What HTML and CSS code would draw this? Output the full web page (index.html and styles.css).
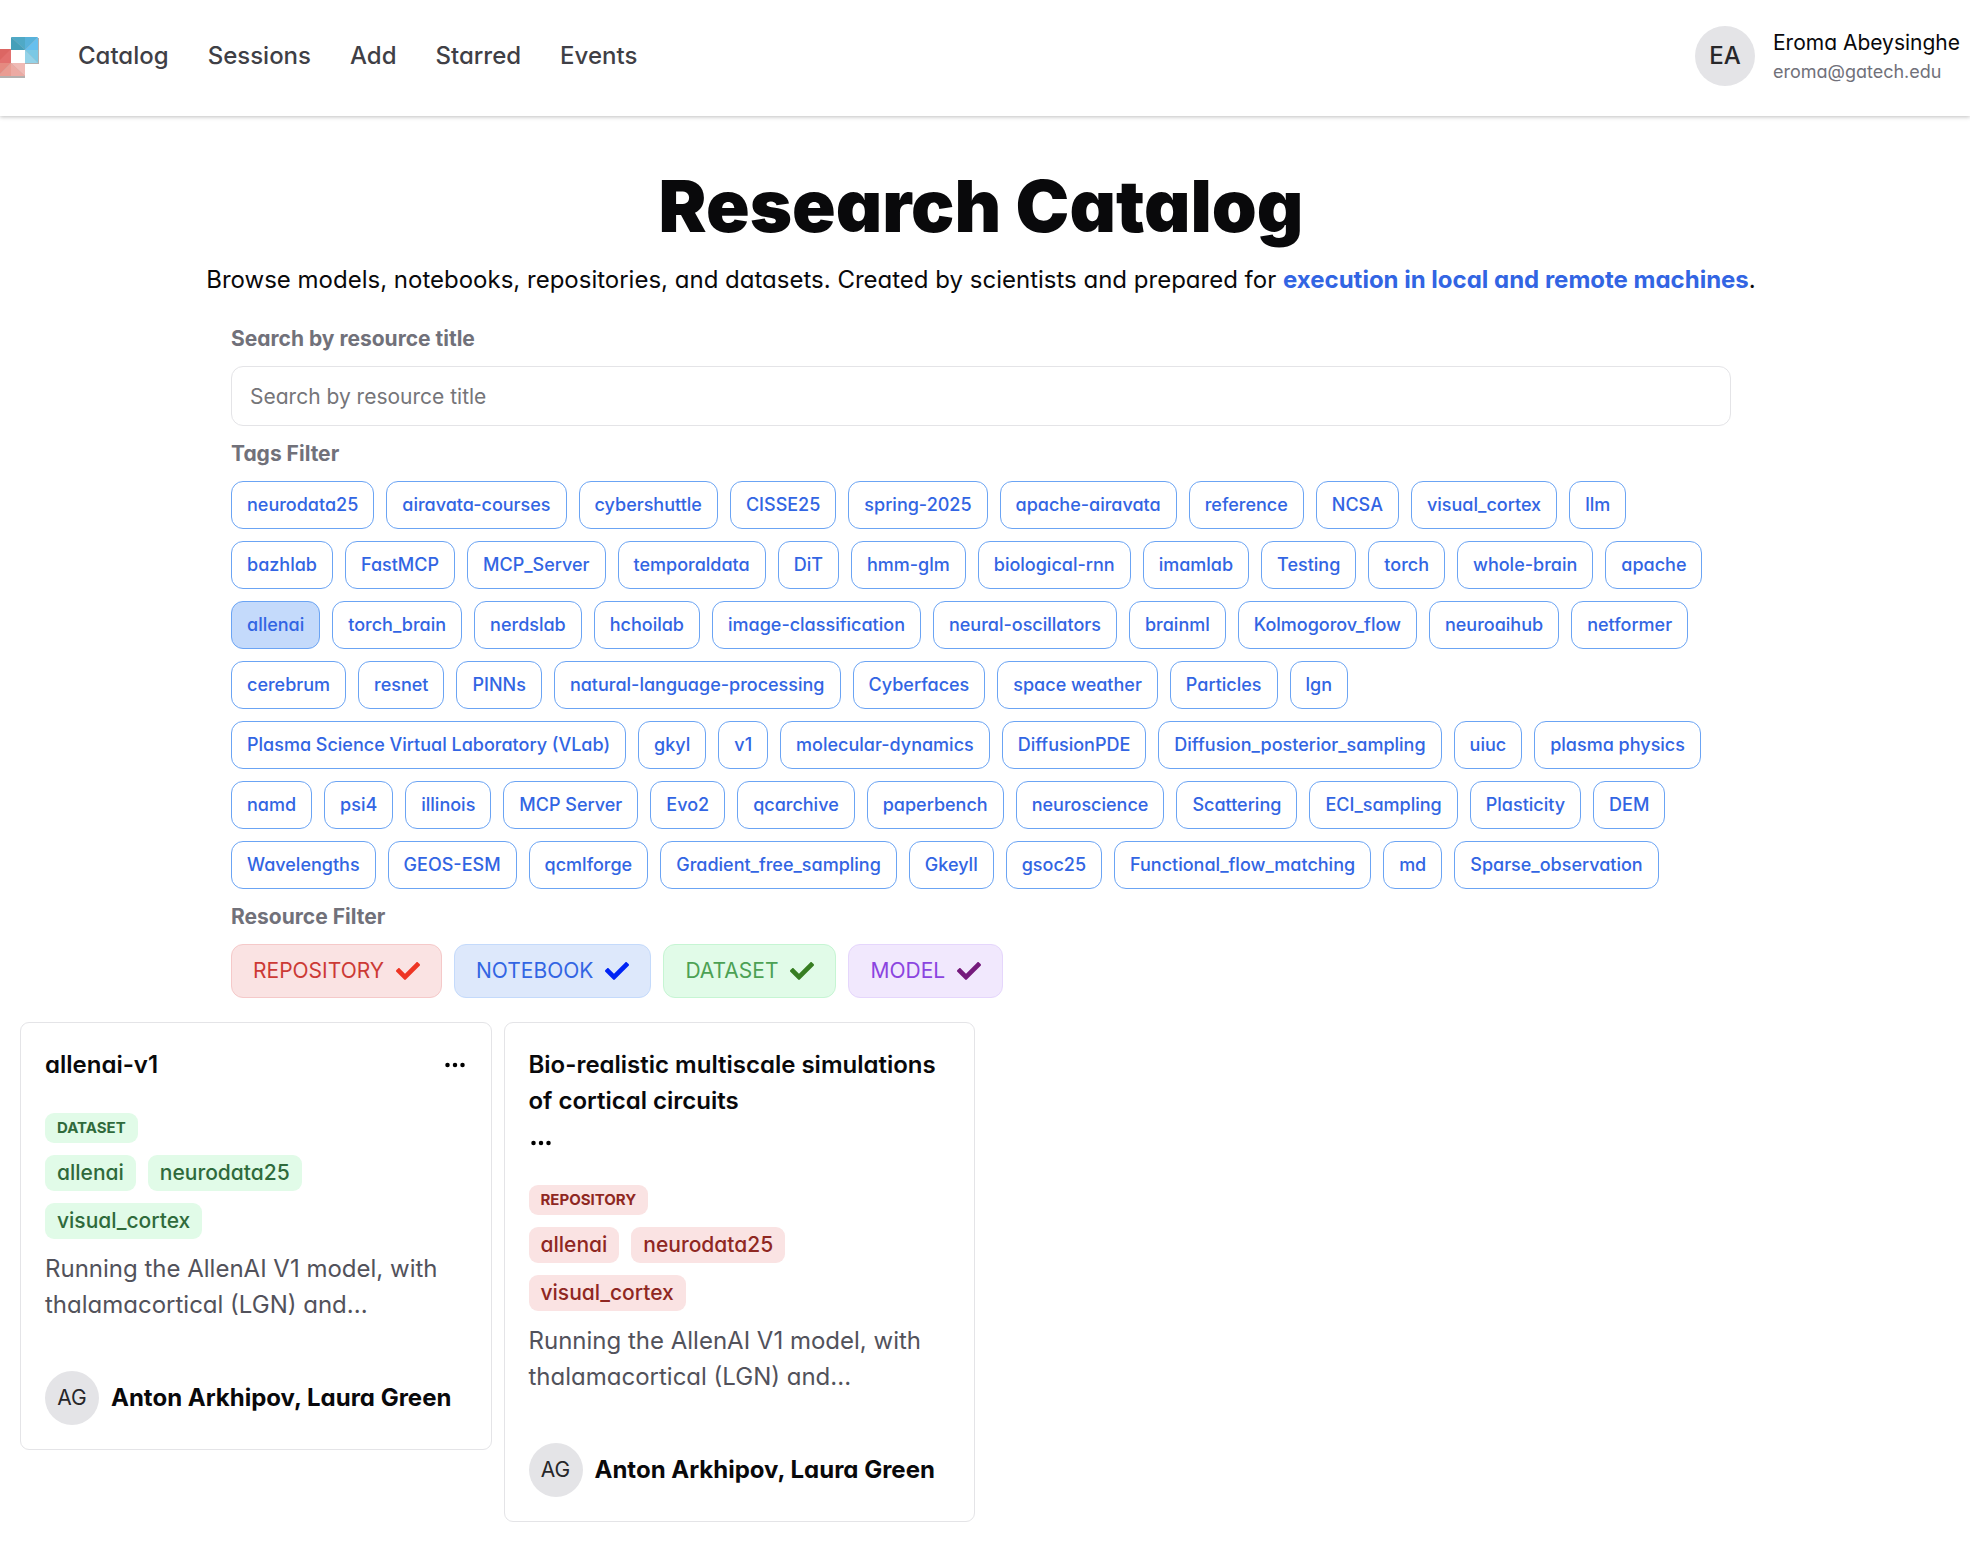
FILE: index.html
```html
<!DOCTYPE html>
<html lang="en">
<head>
<meta charset="utf-8">
<meta name="viewport" content="width=device-width, initial-scale=1">
<title>Research Catalog</title>
<link rel="stylesheet" href="styles.css">
</head>
<body>
<header class="topbar">
  <a class="logo" href="#" aria-label="Home">
    <svg width="39" height="44" viewBox="0 0 39 44">
      <path fill="#77706c" opacity=".55" d="M11 4h28v26H25v14H0V16h11z"/>
      <path fill="#fff" d="M11 16h14v13H11z"/>
      <path fill="#459fb9" d="M11 3l14 13H11z"/><path fill="#4fa9c6" d="M11 3h14v13z"/>
      <path fill="#58b2da" d="M25 3h13L25 16z"/><path fill="#66bfee" d="M38 3v13H25z"/>
      <path fill="#7bc8e4" d="M25 16h13v13z"/><path fill="#93d2e8" d="M25 16l13 13H25z"/>
      <path fill="#e2706e" d="M0 15h11v14H0z"/><path fill="#dc6663" d="M0 15h11L0 26z"/>
      <path fill="#e58a80" d="M0 29h11L0 40z"/><path fill="#e99c92" d="M11 29v13H0v-2z"/>
      <path fill="#f0bab5" d="M11 29h14v13z"/><path fill="#ecaaa3" d="M11 29l14 13H11z"/>
    </svg>
  </a>
  <nav class="nav">
    <a href="#">Catalog</a>
    <a href="#">Sessions</a>
    <a href="#">Add</a>
    <a href="#">Starred</a>
    <a href="#">Events</a>
  </nav>
  <div class="account">
    <span class="avatar avatar-lg">EA</span>
    <div>
      <div class="account-name">Eroma Abeysinghe</div>
      <div class="account-mail">eroma@gatech.edu</div>
    </div>
  </div>
</header>

<main class="page">
  <h1 class="title">Research Catalog</h1>
  <p class="lead">Browse models, notebooks, repositories, and datasets. Created by scientists and prepared for <strong>execution in local and remote machines</strong>.</p>

  <section class="filters">
    <label class="label" for="search">Search by resource title</label>
    <input class="search" id="search" type="text" placeholder="Search by resource title">

    <h2 class="label">Tags Filter</h2>
    <div class="tags">
      <button class="tag">neurodata25</button>
      <button class="tag">airavata-courses</button>
      <button class="tag">cybershuttle</button>
      <button class="tag">CISSE25</button>
      <button class="tag">spring-2025</button>
      <button class="tag">apache-airavata</button>
      <button class="tag">reference</button>
      <button class="tag">NCSA</button>
      <button class="tag">visual_cortex</button>
      <button class="tag">llm</button>
      <button class="tag">bazhlab</button>
      <button class="tag">FastMCP</button>
      <button class="tag">MCP_Server</button>
      <button class="tag">temporaldata</button>
      <button class="tag">DiT</button>
      <button class="tag">hmm-glm</button>
      <button class="tag">biological-rnn</button>
      <button class="tag">imamlab</button>
      <button class="tag">Testing</button>
      <button class="tag">torch</button>
      <button class="tag">whole-brain</button>
      <button class="tag">apache</button>
      <button class="tag tag-on" aria-pressed="true">allenai</button>
      <button class="tag">torch_brain</button>
      <button class="tag">nerdslab</button>
      <button class="tag">hchoilab</button>
      <button class="tag">image-classification</button>
      <button class="tag">neural-oscillators</button>
      <button class="tag">brainml</button>
      <button class="tag">Kolmogorov_flow</button>
      <button class="tag">neuroaihub</button>
      <button class="tag">netformer</button>
      <button class="tag">cerebrum</button>
      <button class="tag">resnet</button>
      <button class="tag">PINNs</button>
      <button class="tag">natural-language-processing</button>
      <button class="tag">Cyberfaces</button>
      <button class="tag">space weather</button>
      <button class="tag">Particles</button>
      <button class="tag">lgn</button>
      <button class="tag">Plasma Science Virtual Laboratory (VLab)</button>
      <button class="tag">gkyl</button>
      <button class="tag">v1</button>
      <button class="tag">molecular-dynamics</button>
      <button class="tag">DiffusionPDE</button>
      <button class="tag">Diffusion_posterior_sampling</button>
      <button class="tag">uiuc</button>
      <button class="tag">plasma physics</button>
      <button class="tag">namd</button>
      <button class="tag">psi4</button>
      <button class="tag">illinois</button>
      <button class="tag">MCP Server</button>
      <button class="tag">Evo2</button>
      <button class="tag">qcarchive</button>
      <button class="tag">paperbench</button>
      <button class="tag">neuroscience</button>
      <button class="tag">Scattering</button>
      <button class="tag">ECI_sampling</button>
      <button class="tag">Plasticity</button>
      <button class="tag">DEM</button>
      <button class="tag">Wavelengths</button>
      <button class="tag">GEOS-ESM</button>
      <button class="tag">qcmlforge</button>
      <button class="tag">Gradient_free_sampling</button>
      <button class="tag">Gkeyll</button>
      <button class="tag">gsoc25</button>
      <button class="tag">Functional_flow_matching</button>
      <button class="tag">md</button>
      <button class="tag">Sparse_observation</button>
    </div>

    <h2 class="label">Resource Filter</h2>
    <div class="kinds">
      <button class="kind kind-red" aria-pressed="true">REPOSITORY <svg class="check" viewBox="0 0 512 512"><path d="M173.898 439.404l-166.4-166.4c-9.997-9.997-9.997-26.206 0-36.204l36.203-36.204c9.997-9.998 26.207-9.998 36.204 0L192 312.69 432.095 72.596c9.997-9.997 26.207-9.997 36.204 0l36.203 36.204c9.997 9.997 9.997 26.206 0 36.204l-294.4 294.401c-9.998 9.997-26.207 9.997-36.204-.001z"/></svg></button>
      <button class="kind kind-blue" aria-pressed="true">NOTEBOOK <svg class="check" viewBox="0 0 512 512"><path d="M173.898 439.404l-166.4-166.4c-9.997-9.997-9.997-26.206 0-36.204l36.203-36.204c9.997-9.998 26.207-9.998 36.204 0L192 312.69 432.095 72.596c9.997-9.997 26.207-9.997 36.204 0l36.203 36.204c9.997 9.997 9.997 26.206 0 36.204l-294.4 294.401c-9.998 9.997-26.207 9.997-36.204-.001z"/></svg></button>
      <button class="kind kind-green" aria-pressed="true">DATASET <svg class="check" viewBox="0 0 512 512"><path d="M173.898 439.404l-166.4-166.4c-9.997-9.997-9.997-26.206 0-36.204l36.203-36.204c9.997-9.998 26.207-9.998 36.204 0L192 312.69 432.095 72.596c9.997-9.997 26.207-9.997 36.204 0l36.203 36.204c9.997 9.997 9.997 26.206 0 36.204l-294.4 294.401c-9.998 9.997-26.207 9.997-36.204-.001z"/></svg></button>
      <button class="kind kind-purple" aria-pressed="true">MODEL <svg class="check" viewBox="0 0 512 512"><path d="M173.898 439.404l-166.4-166.4c-9.997-9.997-9.997-26.206 0-36.204l36.203-36.204c9.997-9.998 26.207-9.998 36.204 0L192 312.69 432.095 72.596c9.997-9.997 26.207-9.997 36.204 0l36.203 36.204c9.997 9.997 9.997 26.206 0 36.204l-294.4 294.401c-9.998 9.997-26.207 9.997-36.204-.001z"/></svg></button>
    </div>
  </section>

  <section class="cards">
    <article class="card card-green">
      <div class="card-head">
        <h3 class="card-title">allenai-v1</h3>
        <button class="more" aria-label="More options"><svg width="24" height="24" viewBox="0 0 16 16"><circle cx="3" cy="8" r="1.5"/><circle cx="8" cy="8" r="1.5"/><circle cx="13" cy="8" r="1.5"/></svg></button>
      </div>
      <span class="badge badge-kind">DATASET</span>
      <div class="badges">
        <span class="badge">allenai</span>
        <span class="badge">neurodata25</span>
        <span class="badge">visual_cortex</span>
      </div>
      <p class="desc">Running the AllenAI V1 model, with thalamacortical (LGN) and...</p>
      <div class="authors">
        <span class="avatar">AG</span>
        <span class="authors-names">Anton Arkhipov, Laura Green</span>
      </div>
    </article>
    <article class="card card-red">
      <div class="card-head">
        <h3 class="card-title">Bio-realistic multiscale simulations of cortical circuits</h3>
        <button class="more" aria-label="More options"><svg width="24" height="24" viewBox="0 0 16 16"><circle cx="3" cy="8" r="1.5"/><circle cx="8" cy="8" r="1.5"/><circle cx="13" cy="8" r="1.5"/></svg></button>
      </div>
      <span class="badge badge-kind">REPOSITORY</span>
      <div class="badges">
        <span class="badge">allenai</span>
        <span class="badge">neurodata25</span>
        <span class="badge">visual_cortex</span>
      </div>
      <p class="desc">Running the AllenAI V1 model, with thalamacortical (LGN) and...</p>
      <div class="authors">
        <span class="avatar">AG</span>
        <span class="authors-names">Anton Arkhipov, Laura Green</span>
      </div>
    </article>
  </section>
</main>
</body>
</html>
```
FILE: styles.css
```css
* { box-sizing: border-box; }

body {
  margin: 0;
  background: #fff;
  color: #09090b;
  font-family: Inter, "Liberation Sans", sans-serif;
  font-feature-settings: "cv11";
  font-optical-sizing: none;
  font-size: 24px;
  line-height: 36px;
}

h1, h2, h3, p { margin: 0; }

button, input {
  font: inherit;
  font-feature-settings: inherit;
  font-optical-sizing: inherit;
  color: inherit;
  margin: 0;
}

button { cursor: pointer; }

.topbar {
  display: flex;
  align-items: center;
  height: 116px;
  padding: 0 10px 4px 0;
  box-shadow: 0 1px 4px rgba(0, 0, 0, .25);
}

.logo { display: flex; margin-right: 39px; }

.nav { display: flex; gap: 39px; }

.nav a {
  color: #3f3f46;
  font-weight: 500;
  text-decoration: none;
}

.account {
  display: flex;
  align-items: center;
  gap: 18px;
  margin-left: auto;
}

.account-name { font-size: 21px; line-height: 30px; }
.account-mail { font-size: 18px; line-height: 27px; color: #71717a; }

.avatar {
  display: flex;
  flex: none;
  align-items: center;
  justify-content: center;
  width: 54px;
  height: 54px;
  border-radius: 50%;
  background: #e4e4e7;
  color: #27272a;
  font-size: 21px;
}

.avatar-lg {
  width: 60px;
  height: 60px;
  font-size: 24px;
  font-weight: 500;
}

.page { padding: 45px 28px 22px 20px; }

.title {
  font-size: 72px;
  line-height: 90px;
  font-weight: 900;
  text-align: center;
}

.lead { margin-top: 11px; text-align: center; }
.lead strong { color: #3265e3; font-weight: 700; }

.filters {
  display: flex;
  flex-direction: column;
  gap: 12px;
  max-width: 1500px;
  margin: 25px auto 24px;
}

.label {
  font-size: 21px;
  line-height: 31px;
  font-weight: 700;
  color: #71717a;
}

.search {
  width: 100%;
  height: 60px;
  padding: 0 18px;
  border: 1px solid #e4e4e7;
  border-radius: 12px;
  font-size: 21px;
  outline: 0;
}

.search::placeholder { color: #757579; opacity: 1; }

.tags, .kinds { display: flex; flex-wrap: wrap; gap: 12px; }

.tag {
  height: 48px;
  padding: 0 15px;
  border: 1px solid #6ba4f4;
  border-radius: 12px;
  background: #fff;
  color: #3265e3;
  font-size: 18px;
  font-weight: 500;
}

.tag-on { background: #c4dafb; }

.kind {
  display: flex;
  align-items: center;
  gap: 12px;
  height: 54px;
  padding: 0 21px;
  border: 1px solid;
  border-radius: 12px;
  font-size: 21px;
}

.check { width: 24px; height: 24px; }

.kind-red { background: #fae3e3; border-color: #f5c9c9; color: #cc3a35; }
.kind-red .check { fill: #ee3524; }
.kind-blue { background: #dde8fb; border-color: #c4dafb; color: #3265e3; }
.kind-blue .check { fill: #0024f5; }
.kind-green { background: #e1fbe8; border-color: #c6f5d3; color: #4ca154; }
.kind-green .check { fill: #377e22; }
.kind-purple { background: #f1e8fd; border-color: #e5d6fc; color: #8b44e0; }
.kind-purple .check { fill: #751a7c; }

.cards {
  display: grid;
  grid-template-columns: repeat(4, minmax(0, 1fr));
  align-items: start;
  gap: 12px;
}

.card {
  display: flex;
  flex-direction: column;
  padding: 24px;
  border: 1px solid #e4e4e7;
  border-radius: 9px;
}

.card-head {
  display: flex;
  flex-wrap: wrap;
  align-items: center;
  justify-content: space-between;
  gap: 12px;
  margin-bottom: 30px;
}

.card-title { font-size: 24px; font-weight: 600; }

.more {
  display: flex;
  padding: 0;
  border: 0;
  background: none;
}

.badge {
  padding: 0 12px;
  border-radius: 9px;
  font-size: 21px;
  font-weight: 500;
}

.badge-kind {
  align-self: flex-start;
  font-size: 15px;
  line-height: 30px;
  font-weight: 700;
}

.card-green .badge { background: #e1fbe8; color: #2f6a3b; }
.card-red .badge { background: #fae3e3; color: #8f2722; }

.badges {
  display: flex;
  flex-wrap: wrap;
  gap: 12px;
  margin: 12px 0;
}

.desc { color: #52525b; }

.authors {
  display: flex;
  align-items: center;
  gap: 12px;
  margin-top: 48px;
}

.authors-names { font-weight: 700; }
```
